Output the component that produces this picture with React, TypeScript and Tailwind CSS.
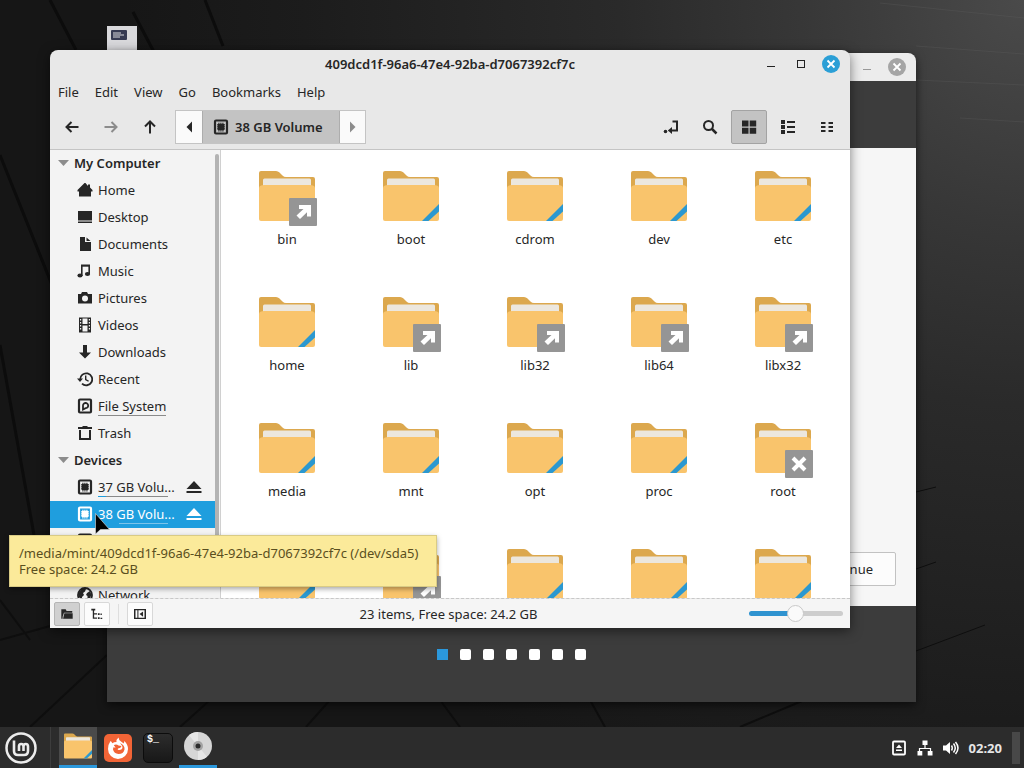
import { useState } from "react";
import type { ReactNode } from "react";

type Emblem = "link" | "locked" | "none";

const folders: { name: string; emblem: Emblem }[] = [
  { name: "bin", emblem: "link" },
  { name: "boot", emblem: "none" },
  { name: "cdrom", emblem: "none" },
  { name: "dev", emblem: "none" },
  { name: "etc", emblem: "none" },
  { name: "home", emblem: "none" },
  { name: "lib", emblem: "link" },
  { name: "lib32", emblem: "link" },
  { name: "lib64", emblem: "link" },
  { name: "libx32", emblem: "link" },
  { name: "media", emblem: "none" },
  { name: "mnt", emblem: "none" },
  { name: "opt", emblem: "none" },
  { name: "proc", emblem: "none" },
  { name: "root", emblem: "locked" },
];

// only the top of this row is scrolled into view, so it carries no captions
const nextFolders: { name: string; emblem: Emblem }[] = [
  { name: "run", emblem: "none" },
  { name: "sbin", emblem: "link" },
  { name: "srv", emblem: "none" },
  { name: "sys", emblem: "none" },
  { name: "tmp", emblem: "none" },
];

const menus = ["File", "Edit", "View", "Go", "Bookmarks", "Help"];

function Icon({ children, size = 16 }: { children: ReactNode; size?: number }) {
  return (
    <svg width={size} height={size} viewBox="0 0 16 16" fill="currentColor" className="shrink-0" aria-hidden="true">
      {children}
    </svg>
  );
}

const line = { fill: "none", stroke: "currentColor", strokeWidth: 2 };

const HomeIcon = () => <Icon><path d="M7.500 1 .5 8v1.500H2V14.500h12V9.500h1.500V8L13 5.500V2.500h-2v1.500L8.500 1z" /></Icon>;
const DesktopIcon = () => <Icon><path d="M1 2h14v9.500H1zM1 12.500h14V14H1z" /></Icon>;
const DocumentIcon = () => <Icon><path d="M3 1h5v5h6v9H3zM9.500 1.500 13.500 5h-4z" /></Icon>;
const MusicIcon = () => (
  <Icon>
    <path d="M4 1.500h9v2.200H4z" />
    <path d="M4 2h1.600v11H4zM11.400 2H13v9h-1.600z" />
    <ellipse cx="3" cy="12.500" rx="2.600" ry="2" />
    <ellipse cx="10.500" cy="11" rx="2.600" ry="2" />
  </Icon>
);
const CameraIcon = () => (
  <Icon><path fillRule="evenodd" d="M5 2h5l1 2h4v9.500H1V4h3zM8 5.500a3 3 0 1 0 0 6 3 3 0 0 0 0-6z" /></Icon>
);
const FilmIcon = () => (
  <Icon>
    <path fillRule="evenodd" d="M2 .5h12v15H2zM5.500 1.500v5.500h5V1.500zM5.500 8.500v6h5v-6zM3 2v1.500h1.200V2zM3 5v1.500h1.200V5zM3 8v1.500h1.200V8zM3 11v1.500h1.200V11zM11.800 2v1.500H13V2zM11.800 5v1.500H13V5zM11.800 8v1.500H13V8zM11.800 11v1.500H13V11z" />
  </Icon>
);
const DownloadIcon = () => <Icon><path d="M6 1h4v7.500h4L8 14.500 2 8.500h4z" /></Icon>;
const RecentIcon = () => (
  <Icon>
    <path d="M3.200 8.500A6 6 0 1 1 5 12.600" {...line} strokeWidth={1.800} />
    <path d="M0 7.500h6L3 11zM8 4.500h1.400v3.700l2.600 1.600-.8 1L8 9z" />
  </Icon>
);
const DriveIcon = () => (
  <Icon>
    <rect x="2" y="1.500" width="12" height="13" rx="1" {...line} strokeWidth={2.200} />
    <path d="M6 10.500V8a2.600 2.600 0 1 1 2.600 2.200L6 11.500z" {...line} strokeWidth={1.800} />
  </Icon>
);
const ChipIcon = () => (
  <Icon>
    <rect x="2" y="1.500" width="12" height="13" rx="1" {...line} strokeWidth={2.200} />
    <path d="M5 5h6v6.200H5z" />
    <path d="M5.300 4.400h6M5.300 11.800h6" {...line} strokeWidth={1.200} strokeDasharray="1.200 .8" />
    <path d="M4.600 5.200v6M11.400 5.200v6" {...line} strokeWidth={1.200} strokeDasharray="1.200 .8" />
  </Icon>
);
const TrashIcon = () => (
  <Icon>
    <path d="M1 2h4l1-1h4l1 1h4v2H1z" />
    <path d="M3 5v9h10V5" {...line} />
  </Icon>
);
const NetworkIcon = () => (
  <Icon>
    <circle cx="8" cy="8" r="7" {...line} strokeWidth={1.800} />
    <path d="M1.500 6 5 2h4L8 4.500 6 6l1 2-2 2v3L2 10zM10 6l3-2 1.500 4-2 4-2-1V9L9 8z" />
  </Icon>
);
const EjectIcon = () => <Icon><path d="M8 2 15.500 10H.5zM.5 12h15v2H.5z" /></Icon>;
const ArrowIcon = ({ turn = "" }: { turn?: string }) => (
  <Icon>
    <path d="M14.500 8H3M7.500 3 2.500 8l5 5" {...line} transform={turn} />
  </Icon>
);

type Place = {
  name: string;
  icon: ReactNode;
  usage?: string;
  eject?: boolean;
  selected?: boolean;
};

const computer: Place[] = [
  { name: "Home", icon: <HomeIcon /> },
  { name: "Desktop", icon: <DesktopIcon /> },
  { name: "Documents", icon: <DocumentIcon /> },
  { name: "Music", icon: <MusicIcon /> },
  { name: "Pictures", icon: <CameraIcon /> },
  { name: "Videos", icon: <FilmIcon /> },
  { name: "Downloads", icon: <DownloadIcon /> },
  { name: "Recent", icon: <RecentIcon /> },
  { name: "File System", icon: <DriveIcon />, usage: "0%" },
  { name: "Trash", icon: <TrashIcon /> },
];

const devices: Place[] = [
  { name: "37 GB Volu...", icon: <ChipIcon />, usage: "12%", eject: true },
  { name: "38 GB Volu...", icon: <ChipIcon />, usage: "30%", eject: true, selected: true },
  { name: "", icon: <ChipIcon /> },
];

const network: Place[] = [{ name: "Network", icon: <NetworkIcon /> }];

function PlaceRow({ place }: { place: Place }) {
  return (
    <li className={`flex h-[27px] items-center pb-px ${place.selected ? "bg-[#1f9ede] text-white" : ""}`}>
      <a href="#" className="flex flex-1 items-center gap-[5px] pl-[27px]">
        {place.icon}
        <span className="relative whitespace-nowrap">
          {place.name}
          {place.usage && (
            <span className={`absolute bottom-0 left-0 h-px ${place.selected ? "bg-[#7cc4ea]" : "bg-[#8a8a8a]"} ${place.eject ? "w-[70px]" : "w-full"}`}>
              <span className="block h-px bg-[#1f9ede]" style={{ width: place.usage }} />
            </span>
          )}
        </span>
      </a>
      {place.eject && (
        <button type="button" aria-label="Eject" className="mr-[17px]">
          <EjectIcon />
        </button>
      )}
    </li>
  );
}

function PlaceGroup({ title, places }: { title?: string; places: Place[] }) {
  return (
    <section>
      <h2 className="flex h-[27px] items-center gap-1 pb-px pl-2 font-semibold">
        <svg width="12" height="8" viewBox="0 0 12 8" fill="#8c8c8c" aria-hidden="true"><path d="M0 1h11L5.500 7z" /></svg>
        {title}
      </h2>
      <ul>
        {places.map((place) => <PlaceRow key={place.name} place={place} />)}
      </ul>
    </section>
  );
}

function FolderArt({ emblem, size = 64 }: { emblem: Emblem; size?: number }) {
  return (
    <svg width={size} height={size} viewBox="0 0 64 64" className="shrink-0" aria-hidden="true">
      <path d="M4 9q0-2 2-2h15q2 0 3.500 1.500l3 3q1.500 1.500 3.500 1.500h27q2 0 2 2v14H4z" fill="#dca84e" />
      <path d="M8 16q0-1.500 1.500-1.500h45q1.500 0 1.500 1.500v6H8z" fill="#ece7de" />
      <path d="M4 24q0-2 2-2.500l3-.5h46l3 .5q2 .5 2 2.500v31q0 2-2 2H6q-2 0-2-2z" fill="#f9c46c" />
      {emblem === "none" && <path d="M60 40v7.500l-10.500 9.500H43z" fill="#2b98d0" />}
      {emblem !== "none" && <rect x="34" y="34" width="28" height="28" rx="1" fill="#959595" />}
      {emblem === "link" && (
        <path d="M44 41h12v11.500h-4v-4.300L45 55l-3.500-3.500 7-6.500H44z" fill="#fff" />
      )}
      {emblem === "locked" && <path d="m42 42 12 12m0-12-12 12" stroke="#fff" strokeWidth="4" />}
    </svg>
  );
}

function WindowClose({ color }: { color: string }) {
  return (
    <svg width="18" height="18" viewBox="0 0 18 18" aria-hidden="true">
      <circle cx="9" cy="9" r="9" fill={color} />
      <path d="m5.500 5.500 7 7m0-7-7 7" stroke="#fff" strokeWidth="1.800" />
    </svg>
  );
}

function Toolbar() {
  const [view, setView] = useState("icons");
  const views = [
    { id: "icons", label: "Icon view", icon: <path d="M1 1.500h6.500v6H1zM8.700 1.500h6.500v6H8.700zM1 8.700h6.500v6H1zM8.700 8.700h6.500v6H8.700z" /> },
    { id: "list", label: "List view", icon: <path d="M1 1h4v4H1zM1 6h4v4H1zM1 11h4v4H1zM7 2h8v2H7zM7 7h8v2H7zM7 12h8v2H7z" /> },
    { id: "compact", label: "Compact view", icon: <path d="M2 3h4.500v2H2zM2 7h4.500v2H2zM2 11h4.500v2H2zM9.500 3H14v2H9.500zM9.500 7H14v2H9.500zM9.500 11H14v2H9.500z" /> },
  ];

  return (
    <div className="flex h-11 items-start border-b border-[#c4c4c4] pt-1 pr-[5px] pl-[2px]">
      <button type="button" aria-label="Back" className="flex h-[34px] w-[39px] items-center justify-center"><ArrowIcon /></button>
      <button type="button" aria-label="Forward" className="flex h-[34px] w-[39px] items-center justify-center text-[#8c8c8c]"><ArrowIcon turn="rotate(180 8 8)" /></button>
      <button type="button" aria-label="Up" className="flex h-[34px] w-[39px] items-center justify-center"><ArrowIcon turn="rotate(90 8 8)" /></button>
      <div className="ml-1.5 flex h-[34px] items-stretch border border-[#c4c4c4] bg-[#fafafa]">
        <button type="button" aria-label="Scroll path left" className="flex w-[26px] items-center justify-center">
          <Icon><path d="M11 2.500v11L5.500 8z" /></Icon>
        </button>
        <button type="button" className="flex w-[138px] items-center gap-1.5 border-x border-[#adadad] bg-[#c3c3c3] pl-2.5 font-semibold">
          <ChipIcon />
          38 GB Volume
        </button>
        <button type="button" aria-label="Scroll path right" className="flex w-[25px] items-center justify-center text-[#8c8c8c]">
          <Icon><path d="M5 2.500v11L10.500 8z" /></Icon>
        </button>
      </div>
      <div className="ml-auto flex gap-[3px]">
        <button type="button" aria-label="Toggle location entry" className="flex h-[34px] w-9 items-center justify-center">
          <Icon>
            <path d="M9.500 2.500H14v9H8" {...line} />
            <path d="M4.800 11.500 9 8v7z" />
            <circle cx="2.500" cy="12.500" r="1.800" />
          </Icon>
        </button>
        <button type="button" aria-label="Search" className="flex h-[34px] w-9 items-center justify-center">
          <Icon>
            <circle cx="6.500" cy="6.500" r="4.500" {...line} />
            <path d="m10 10 4.500 4.500" {...line} strokeWidth={2.500} />
          </Icon>
        </button>
        {views.map((item) => (
          <button
            key={item.id}
            type="button"
            aria-label={item.label}
            aria-pressed={view === item.id}
            onClick={() => setView(item.id)}
            className={`flex h-[34px] w-9 items-center justify-center rounded-xs border ${view === item.id ? "border-[#a3a3a3] bg-[#c3c3c3]" : "border-transparent"}`}
          >
            <Icon>{item.icon}</Icon>
          </button>
        ))}
      </div>
    </div>
  );
}

function StatusBar() {
  const [zoom, setZoom] = useState(49);

  return (
    <footer className="flex h-[29px] items-center bg-[#f5f5f5] px-1">
      <div className="flex flex-1 items-center gap-1">
        <button type="button" aria-label="Show places" aria-pressed="true" className="flex h-6 w-[26px] items-center justify-center rounded-xs border border-[#b5b5b5] bg-[#d0d0d0]">
          <Icon size={14}><path d="M1.500 2.500h5l1 2h6.500v2H4.500L3 11v2.500H1.500zM5 7.200h9.500v6.300H3.500z" /></Icon>
        </button>
        <button type="button" aria-label="Show treeview" className="flex h-6 w-[26px] items-center justify-center rounded-xs border border-[#d8d8d8] bg-[#fcfcfc]">
          <Icon size={14}><path d="M1.500 2H6v2H4.700v3H8v1.500H4.700V12H8v1.500H3.200V4H1.500zM9 7h2v2H9zM12 7.500h1.500V9H12zM9 11.800h2v2H9zM12 12.300h2v1.500h-2z" /></Icon>
        </button>
        <span className="mr-1 ml-1 h-5 w-px bg-[#dedede]" />
        <button type="button" aria-label="Hide sidebar" className="flex h-6 w-[26px] items-center justify-center rounded-xs border border-[#d8d8d8] bg-[#fcfcfc]">
          <Icon size={14}>
            <path d="M2 3h12v10H2z" {...line} strokeWidth={1.700} />
            <path d="M5 3h1.200v10H5zM11.500 5v6l-4-3z" />
          </Icon>
        </button>
      </div>
      <p>23 items, Free space: 24.2 GB</p>
      <div className="flex flex-1 items-center justify-end pr-[3px]">
        <input
          type="range"
          aria-label="Zoom"
          value={zoom}
          onChange={(e) => setZoom(Number(e.target.value))}
          style={{ backgroundImage: `linear-gradient(to right, #2f93d0 ${zoom}%, #cdcdcd ${zoom}%)` }}
          className="h-[5px] w-[94px] appearance-none rounded-full [&::-webkit-slider-thumb]:size-[17px] [&::-webkit-slider-thumb]:appearance-none [&::-webkit-slider-thumb]:rounded-full [&::-webkit-slider-thumb]:border [&::-webkit-slider-thumb]:border-solid [&::-webkit-slider-thumb]:border-[#c9c9c9] [&::-webkit-slider-thumb]:bg-[#fafafa]"
        />
      </div>
    </footer>
  );
}

function FileManager() {
  return (
    <main className="absolute top-[50px] left-[50px] w-[800px] overflow-hidden rounded-t-lg bg-[#e8e8e8] shadow-[0_3px_12px_rgba(0,0,0,0.5)]">
      <header className="flex h-7 items-center px-2.5">
        <span className="w-[78px]" />
        <h1 className="flex-1 text-center font-semibold">409dcd1f-96a6-47e4-92ba-d7067392cf7c</h1>
        <div className="flex w-[78px] items-center justify-between">
          <button type="button" aria-label="Minimize" className="flex size-[18px] items-center justify-center"><span className="mt-1 h-px w-2 bg-[#222]" /></button>
          <button type="button" aria-label="Maximize" className="flex size-[18px] items-center justify-center"><span className="size-2 border border-[#222]" /></button>
          <button type="button" aria-label="Close"><WindowClose color="#2b9fd6" /></button>
        </div>
      </header>
      <nav className="flex h-7 items-center gap-4 px-2">
        {menus.map((menu) => <button key={menu} type="button">{menu}</button>)}
      </nav>
      <Toolbar />
      <div className="flex h-[449px] overflow-hidden border-b border-dashed border-[#c8c8c8]">
        <aside className="flex w-[171px] border-r border-[#d0d0d0] bg-[#f3f3f3]">
          <div className="min-w-0 flex-1">
            <PlaceGroup title="My Computer" places={computer} />
            <PlaceGroup title="Devices" places={devices} />
            <PlaceGroup places={network} />
          </div>
          <span className="mt-1 mr-px -ml-1 h-[420px] w-1 rounded-full bg-[#b3b3b3]" />
        </aside>
        <div className="grid flex-1 auto-rows-[126px] grid-cols-5 bg-white pr-[5px] pl-1">
          {folders.map((folder) => (
            <button key={folder.name} type="button" className="flex flex-col items-center pt-3.5">
              <FolderArt emblem={folder.emblem} />
              <span className="mt-px">{folder.name}</span>
            </button>
          ))}
          {nextFolders.map((folder) => (
            <button key={folder.name} type="button" aria-label={folder.name} className="flex flex-col items-center pt-3.5">
              <FolderArt emblem={folder.emblem} />
            </button>
          ))}
        </div>
      </div>
      <StatusBar />
    </main>
  );
}

function Installer() {
  return (
    <section className="absolute top-[53px] left-[107px] w-[809px] overflow-hidden rounded-t-lg bg-[#3c3c3c] shadow-[0_3px_10px_rgba(0,0,0,0.6)]">
      <header className="flex h-7 items-center justify-end gap-3 bg-[#ececec] px-2.5">
        <button type="button" aria-label="Minimize" className="flex size-[18px] items-center justify-center"><span className="mt-1 h-px w-2 bg-[#999]" /></button>
        <button type="button" aria-label="Close"><WindowClose color="#a5a5a5" /></button>
      </header>
      <div className="h-[67px]" />
      <div className="flex h-[458px] items-end justify-end bg-[#f6f6f6] px-5 pb-5">
        <button type="button" className="h-[34px] rounded-xs border border-[#c2c2c2] bg-[#fcfcfc] px-[22px]">Continue</button>
      </div>
      <div className="flex h-24 items-center justify-center gap-3">
        <span className="size-[11px] bg-[#2b98dc]" />
        <span className="size-[11px] rounded-xs bg-white" />
        <span className="size-[11px] rounded-xs bg-white" />
        <span className="size-[11px] rounded-xs bg-white" />
        <span className="size-[11px] rounded-xs bg-white" />
        <span className="size-[11px] rounded-xs bg-white" />
        <span className="size-[11px] rounded-xs bg-white" />
      </div>
    </section>
  );
}

function Wallpaper() {
  return (
    <svg className="absolute inset-0 size-full" viewBox="0 0 1024 727" preserveAspectRatio="none" aria-hidden="true">
      <defs>
        <radialGradient id="glow" cx="1024" cy="0" r="900" gradientUnits="userSpaceOnUse">
          <stop offset="0" stopColor="#4a4a4a" />
          <stop offset=".25" stopColor="#373737" />
          <stop offset=".45" stopColor="#2a2a2a" />
          <stop offset=".8" stopColor="#1c1c1c" />
          <stop offset="1" stopColor="#161616" />
        </radialGradient>
      </defs>
      <path d="M0 0h1024v727H0z" fill="url(#glow)" />
      <g stroke="#0c0c0c" strokeWidth="3" fill="none">
        <path d="M50 0 76 50M133 12l22 42M205 0l18 46M0 155l52 130M0 345l34 190" />
      </g>
      <g stroke="#0e0e0e" strokeWidth="2" fill="none">
        <path d="M0 640l107-30M30 727l77-72M0 600l30 40M210 700l-30 27M330 700l-24 27M440 700l20 27M590 700l15 27M740 727l62-26" />
        <path d="M916 492l20-5M916 569l20-7M916 651l69-26" strokeWidth="1" />
      </g>
      <g stroke="#606060" strokeOpacity=".3" fill="none">
        <path d="M880 3l144 15M916 46l108 8M916 80l108 5M960 118l64 4" />
      </g>
    </svg>
  );
}

function Taskbar() {
  return (
    <footer className="relative flex h-[41px] items-center bg-[#2c2c2c] pr-1 pl-1 text-white">
      <button type="button" aria-label="Menu">
        <svg width="34" height="34" viewBox="0 0 34 34" fill="none" stroke="#ececec" aria-hidden="true">
          <circle cx="17" cy="17" r="14.500" strokeWidth="2.500" />
          <path d="M10 9.500v10.500q0 4 4 4h6q4 0 4-4v-4.500q0-2.500-2.200-2.500t-2.300 2.500v4.500m0-4.500q0-2.500-2.300-2.500T15 15.500v4.500" strokeWidth="2.600" />
        </svg>
      </button>
      <span className="mr-2 ml-3 h-[41px] w-px bg-[#3d3d3d]" />
      <nav className="flex h-full gap-0.5">
        <button type="button" aria-label="Files" className="flex w-[38px] items-center justify-center border-b-3 border-[#2b98dc] bg-[#4a4a4a]">
          <FolderArt emblem="none" size={32} />
        </button>
        <button type="button" aria-label="Firefox" className="flex w-[38px] items-center justify-center">
          <svg width="28" height="28" viewBox="0 0 28 28" aria-hidden="true">
            <rect width="28" height="28" rx="5" fill="#f26436" />
            <path d="M6.500 7q1 .5 1.800 2.200Q10 8 12.500 8q-.5-2.500 2-4.500 0 2 2.500 4 1.500 1 2.500 2 .8-1 .8-2.500 3.700 3.500 3.700 8a10 10 0 0 1-20 0q0-4.500 2.500-8z" fill="#fff" />
            <path d="M10 11q2.500-1 4.500.5l3 .5q-.5 2-3.500 2.500-1 1 .5 1.500 3 .5 4-2 0-2.500-2.500-5 5 2 4.500 6.500-1 4.500-6 4.500-4.500-.5-5.500-4.500 0-1.500.8-2.500 1 1 1.700.5-.5-1-1.500-2z" fill="#f26436" />
          </svg>
        </button>
        <button type="button" aria-label="Terminal" className="flex w-[38px] items-center justify-center">
          <span className="size-[30px] rounded-[5px] border border-[#0c0c0c] bg-linear-to-b from-[#2d2d2d] to-[#181818] pl-[3px] text-left font-['Liberation_Mono'] text-[10px] leading-3 font-bold">$_</span>
        </button>
        <button type="button" aria-label="Install" className="flex w-[38px] items-center justify-center border-b-3 border-[#2b98dc]">
          <svg width="28" height="28" viewBox="0 0 28 28" aria-hidden="true">
            <circle cx="14" cy="14" r="14" fill="#d6d6d6" />
            <path d="M14 14 5 3.300A14 14 0 0 1 14 0zM14 14l9 10.700A14 14 0 0 1 14 28z" fill="#e6e6e6" />
            <circle cx="14" cy="14" r="5" fill="#a3a3a3" />
            <circle cx="14" cy="14" r="2.500" fill="#2c2c2c" />
          </svg>
        </button>
      </nav>
      <div className="ml-auto flex items-center gap-2.5">
        <button type="button" aria-label="Removable drives">
          <Icon>
            <rect x="2" y="1.500" width="12" height="13" rx="1" {...line} strokeWidth={1.800} />
            <path d="m8 4.500 3 3.500H5zM5 9.500h6V11H5z" />
          </Icon>
        </button>
        <button type="button" aria-label="Network">
          <Icon>
            <path d="M5.500.5h5v4.500h-5zM.5 11h4.800v4.500H.5zM10.700 11h4.800v4.500h-4.800z" />
            <path d="M8 5v3.500M2.500 11V8.500h11V11" {...line} strokeWidth={1.200} />
          </Icon>
        </button>
        <button type="button" aria-label="Volume">
          <Icon>
            <path d="M0 5.500h3L7 2v12l-4-3.500H0z" />
            <path d="M8.500 5.500q1.500 2.500 0 5M10.500 3.500q3.500 4.500 0 9M12.500 2q5 6 0 12" {...line} strokeWidth={1.500} />
          </Icon>
        </button>
        <time className="font-bold text-[#e6e6e6]">02:20</time>
        <button type="button" aria-label="Show desktop" className="h-8 w-2 bg-[#484848]" />
      </div>
    </footer>
  );
}

function App() {
  return (
    <div className="flex min-h-screen flex-col bg-[#171717] font-['Noto_Sans','Open_Sans',sans-serif] text-[13px] leading-5 text-[#262626]">
      <div className="relative flex-1 overflow-hidden">
        <Wallpaper />
        <svg className="absolute top-[26px] left-[107px]" width="30" height="30" viewBox="0 0 30 30" aria-hidden="true">
          <path d="M0 0h30v30H0z" fill="#d9d9dc" />
          <rect x="4" y="4" width="16" height="10" rx="1" fill="#363a52" />
          <path d="M6 7h8M6 9h11M6 11h7" stroke="#d9d9dc" />
        </svg>
        <Installer />
        <FileManager />
        <div role="tooltip" className="absolute top-[535px] left-[9px] border border-[#d9cb85] bg-[#fbea9a] py-[9px] pr-[18px] pl-[9px] leading-4 text-[#5a4f20] shadow-[0_2px_5px_rgba(0,0,0,0.35)]">
          <p>/media/mint/409dcd1f-96a6-47e4-92ba-d7067392cf7c (/dev/sda5)</p>
          <p>Free space: 24.2 GB</p>
        </div>
        <svg className="absolute top-[512px] left-[94px]" width="18" height="24" viewBox="0 0 18 24" aria-hidden="true">
          <path d="M1.500 1.500v20.500l5-4.500h9z" fill="#000" stroke="#ddd" strokeWidth=".6" />
        </svg>
      </div>
      <Taskbar />
    </div>
  );
}

export default App;
